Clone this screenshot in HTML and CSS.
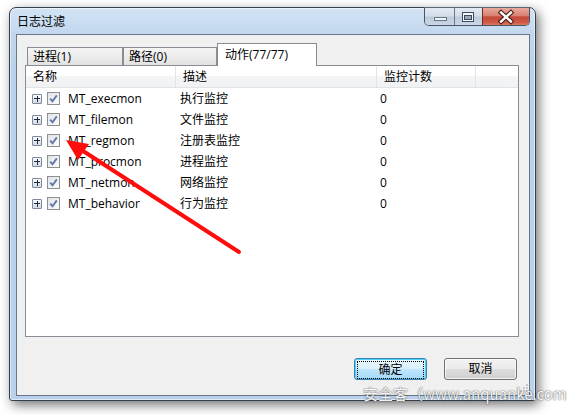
FILE: index.html
```html
<!DOCTYPE html>
<html lang="zh-CN">
<head>
<meta charset="utf-8">
<title>日志过滤</title>
<link rel="stylesheet" href="styles.css">
</head>
<body>
<div class="window">
  <div class="titlebar">
    <span class="title">日志过滤</span>
    <div class="caption">
      <div class="cbtn min">
        <svg width="29" height="18" viewBox="0 0 29 18"><rect x="9.5" y="9.5" width="12" height="3" fill="#eef2f7" stroke="#6b7888"/></svg>
      </div>
      <div class="cbtn max">
        <svg width="27" height="18" viewBox="0 0 27 18"><rect x="7.5" y="4.5" width="11" height="9" fill="#f4f7fb" stroke="#3f4a58"/><rect x="9.5" y="7.5" width="7" height="4" fill="#9aa7b8" stroke="#3f4a58"/></svg>
      </div>
      <div class="cbtn close">
        <svg width="46" height="18" viewBox="0 0 46 18"><path d="M18 4.5 L28 13.5 M28 4.5 L18 13.5" stroke="#4a1c14" stroke-width="4.6" stroke-linecap="square"/><path d="M18 4.5 L28 13.5 M28 4.5 L18 13.5" stroke="#ffffff" stroke-width="2.4" stroke-linecap="square"/></svg>
      </div>
    </div>
  </div>
  <div class="client">
    <div class="tabs">
      <div class="tab t1">进程(1)</div>
      <div class="tab t2">路径(0)</div>
      <div class="tab active">动作(77/77)</div>
    </div>
    <div class="panel">
      <div class="header">
        <div class="hc">名称</div>
        <div class="hc">描述</div>
        <div class="hc">监控计数</div>
        <div class="hc last"></div>
      </div>
      <div class="row">
        <div class="cell name"><span class="exp"></span><span class="chk"><svg width="11" height="11" viewBox="0 0 11 11"><path d="M2.2 5.6 L4.5 8.2 L8.8 2.4" fill="none" stroke="#6077a8" stroke-width="1.8"/></svg></span><span>MT_execmon</span></div>
        <div class="cell desc">执行监控</div>
        <div class="cell cnt">0</div>
      </div>
      <div class="row">
        <div class="cell name"><span class="exp"></span><span class="chk"><svg width="11" height="11" viewBox="0 0 11 11"><path d="M2.2 5.6 L4.5 8.2 L8.8 2.4" fill="none" stroke="#6077a8" stroke-width="1.8"/></svg></span><span>MT_filemon</span></div>
        <div class="cell desc">文件监控</div>
        <div class="cell cnt">0</div>
      </div>
      <div class="row">
        <div class="cell name"><span class="exp"></span><span class="chk"><svg width="11" height="11" viewBox="0 0 11 11"><path d="M2.2 5.6 L4.5 8.2 L8.8 2.4" fill="none" stroke="#6077a8" stroke-width="1.8"/></svg></span><span>MT_regmon</span></div>
        <div class="cell desc">注册表监控</div>
        <div class="cell cnt">0</div>
      </div>
      <div class="row">
        <div class="cell name"><span class="exp"></span><span class="chk"><svg width="11" height="11" viewBox="0 0 11 11"><path d="M2.2 5.6 L4.5 8.2 L8.8 2.4" fill="none" stroke="#6077a8" stroke-width="1.8"/></svg></span><span>MT_procmon</span></div>
        <div class="cell desc">进程监控</div>
        <div class="cell cnt">0</div>
      </div>
      <div class="row">
        <div class="cell name"><span class="exp"></span><span class="chk"><svg width="11" height="11" viewBox="0 0 11 11"><path d="M2.2 5.6 L4.5 8.2 L8.8 2.4" fill="none" stroke="#6077a8" stroke-width="1.8"/></svg></span><span>MT_netmon</span></div>
        <div class="cell desc">网络监控</div>
        <div class="cell cnt">0</div>
      </div>
      <div class="row">
        <div class="cell name"><span class="exp"></span><span class="chk"><svg width="11" height="11" viewBox="0 0 11 11"><path d="M2.2 5.6 L4.5 8.2 L8.8 2.4" fill="none" stroke="#6077a8" stroke-width="1.8"/></svg></span><span>MT_behavior</span></div>
        <div class="cell desc">行为监控</div>
        <div class="cell cnt">0</div>
      </div>
    </div>
    <div class="buttons">
      <div class="btn default"><span class="focus">确定</span></div>
      <div class="btn">取消</div>
    </div>
    <svg class="grip" width="10" height="10" viewBox="0 0 10 10">
      <g fill="#c5c9cf"><rect x="8" y="0" width="2" height="2"/><rect x="5" y="3" width="2" height="2"/><rect x="8" y="3" width="2" height="2"/><rect x="2" y="6" width="2" height="2"/><rect x="5" y="6" width="2" height="2"/><rect x="8" y="6" width="2" height="2"/></g>
    </svg>
  </div>
</div>
<svg class="arrow" width="579" height="415" viewBox="0 0 579 415">
  <line x1="239" y1="252" x2="80" y2="149" stroke="#ff0d0d" stroke-width="4" stroke-linecap="round"/>
  <polygon points="66,140 89,144 78,160" fill="#ff0d0d"/>
</svg>
<div class="watermark">安全客（www.anquanke.com</div>
</body>
</html>
```
FILE: styles.css
```css
html, body {
  margin: 0;
  padding: 0;
}
body {
  width: 579px;
  height: 415px;
  overflow: hidden;
  background: #ffffff;
  font-family: "Open Sans", "Noto Sans CJK SC", sans-serif;
  font-size: 12px;
  color: #000;
  position: relative;
}
.window {
  box-sizing: border-box;
  margin: 7px 0 0 9px;
  width: 527px;
  height: 394px;
  border: 1px solid #34404e;
  border-radius: 7px 7px 3px 3px;
  background: linear-gradient(to bottom, #d3e3f5 0px, #c2d7ee 26px, #b9d1ea 60px, #b9d1ea 100%);
  box-shadow: 3px 4px 12px rgba(0,0,0,0.55), inset 0 0 0 1px rgba(255,255,255,0.55);
  display: flex;
  flex-direction: column;
}
.titlebar {
  height: 26px;
  display: flex;
  justify-content: space-between;
  align-items: flex-start;
  padding: 0 5px 0 7px;
}
.title {
  padding-top: 6px;
  line-height: 16px;
  font-size: 12px;
  color: #000;
}
.caption {
  display: flex;
  margin-top: -1px;
  height: 19px;
  box-sizing: border-box;
  border: 1px solid #4a5564;
  border-top-color: #5c6775;
  border-radius: 0 0 5px 5px;
  overflow: hidden;
}
.cbtn {
  height: 18px;
  box-sizing: border-box;
}
.cbtn svg { display: block; }
.min {
  width: 30px;
  border-right: 1px solid #6c7787;
  background: linear-gradient(to bottom, #e3eaf3 0%, #d3dde9 45%, #bfcbdb 50%, #cbd7e6 100%);
}
.max {
  width: 28px;
  border-right: 1px solid #6c2e25;
  background: linear-gradient(to bottom, #e3eaf3 0%, #d3dde9 45%, #bfcbdb 50%, #cbd7e6 100%);
}
.close {
  width: 46px;
  background: linear-gradient(to bottom, #e9a99c 0%, #d98373 42%, #c4483a 50%, #cf5a45 80%, #e08670 100%);
}
.client {
  position: relative;
  box-sizing: border-box;
  margin: 0 5px 0 6px;
  height: 362px;
  background: #f0f0f0;
  border: 1px solid #687888;
  padding: 9px 10px 15px 8px;
  display: flex;
  flex-direction: column;
}
.tabs {
  height: 21px;
  display: flex;
  align-items: flex-end;
  padding-left: 2px;
}
.tab {
  box-sizing: border-box;
  height: 18px;
  border: 1px solid #898c95;
  border-bottom: none;
  background: linear-gradient(to bottom, #f5f5f5 0%, #ececec 50%, #e2e2e2 100%);
  line-height: 18px;
  padding-left: 5px;
  white-space: nowrap;
}
.t1 { width: 96px; }
.t2 { width: 94px; margin-left: 0; }
.tab.active {
  width: 100px;
  height: 23px;
  margin-bottom: -1px;
  background: #ffffff;
  padding-left: 7px;
  line-height: 21px;
  position: relative;
  z-index: 1;
}
.panel {
  box-sizing: border-box;
  height: 272px;
  border: 1px solid #898c95;
  background: #ffffff;
}
.header {
  display: grid;
  grid-template-columns: 150px 201px 99px 1fr;
  height: 22px;
  box-sizing: border-box;
  border-bottom: 1px solid #e2e3e5;
  background: linear-gradient(to bottom, #ffffff 0%, #ffffff 45%, #f4f5f7 50%, #f1f2f4 100%);
}
.hc {
  border-right: 1px solid #e3e4e6;
  padding-left: 7px;
  line-height: 21px;
  white-space: nowrap;
}
.hc.last { border-right: none; }
.row {
  display: grid;
  grid-template-columns: 150px 201px 99px;
  height: 21px;
  line-height: 21px;
}
.cell { white-space: nowrap; }
.name {
  display: flex;
  align-items: center;
  padding-left: 6px;
}
.desc { padding-left: 4px; }
.cnt { padding-left: 3px; }
.exp {
  box-sizing: border-box;
  width: 10px;
  height: 10px;
  border: 1px solid #7d8898;
  border-radius: 1px;
  background:
    linear-gradient(#1d2a3a, #1d2a3a) center / 6px 1px no-repeat,
    linear-gradient(#1d2a3a, #1d2a3a) center / 1px 6px no-repeat,
    linear-gradient(to bottom, #fbfcfd, #d3dae4);
  margin-right: 5px;
}
.chk {
  box-sizing: border-box;
  width: 13px;
  height: 13px;
  border: 1px solid #8f8f8f;
  background: linear-gradient(135deg, #e0e4ea, #fbfbfb);
  margin-right: 8px;
  display: flex;
  align-items: center;
  justify-content: center;
}
.chk svg { display: block; }
.buttons {
  margin-top: 21px;
  margin-right: 2px;
  display: flex;
  justify-content: flex-end;
  gap: 17px;
}
.btn {
  box-sizing: border-box;
  width: 73px;
  height: 22px;
  border: 1px solid #707070;
  border-radius: 3px;
  background: linear-gradient(to bottom, #f2f2f2 0%, #ebebeb 50%, #dddddd 50%, #cfcfcf 100%);
  box-shadow: inset 0 0 0 1px rgba(255,255,255,0.7);
  text-align: center;
  line-height: 20px;
}
.btn.default {
  border-color: #3c7fb1;
  background: linear-gradient(to bottom, #eaf6fd 0%, #d9f0fc 50%, #bee6fd 50%, #a7d9f5 100%);
  box-shadow: inset 0 0 0 1px #48d3f7;
  padding: 2px;
}
.focus {
  display: block;
  height: 16px;
  line-height: 16px;
  border: 1px dotted #000;
}
.grip {
  position: absolute;
  right: 1px;
  bottom: 1px;
}
.arrow {
  position: absolute;
  left: 0;
  top: 0;
  pointer-events: none;
}
.watermark {
  position: absolute;
  left: 363px;
  top: 384px;
  font-family: "Noto Sans CJK SC", sans-serif;
  font-size: 15px;
  line-height: 20px;
  color: rgba(255,255,255,0.95);
  text-shadow: 0 0 2px rgba(0,0,0,0.55), 0 0 1px rgba(0,0,0,0.4);
  white-space: nowrap;
}
```
